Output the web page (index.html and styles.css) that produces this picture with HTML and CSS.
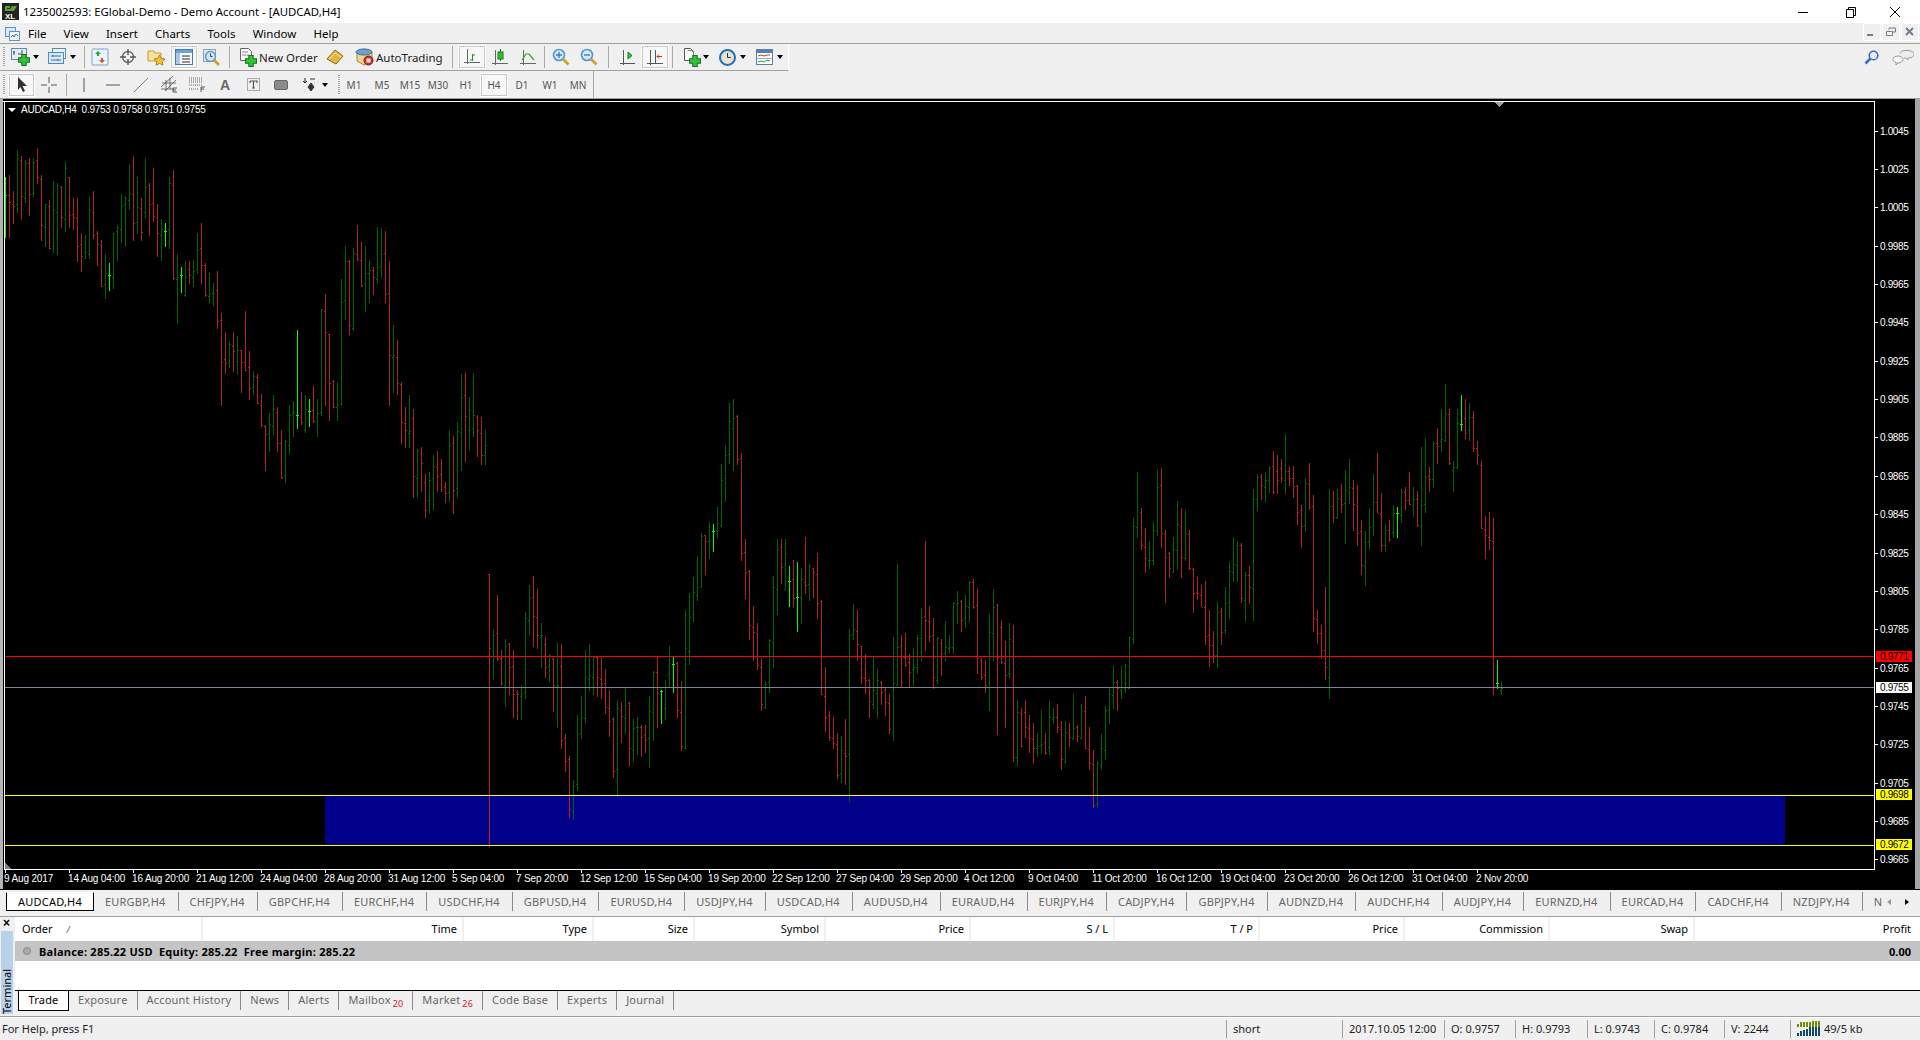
FILE: index.html
```html
<!DOCTYPE html>
<html lang="en">
<head>
    <meta charset="UTF-8">
    <title>1235002593: EGlobal-Demo - Demo Account - [AUDCAD,H4]</title>
    <link rel="stylesheet" href="styles.css">
</head>
<body>
    <svg class="defs" width="0" height="0">
        <symbol id="plus" viewBox="0 0 11 11"><path d="M3.5.5h4v3h3v4h-3v3h-4v-3h-3v-4h3z" fill="#35c435" stroke="#14752a"/></symbol>
        <symbol id="lens" viewBox="0 0 18 18"><circle cx="7" cy="7" r="5.5" fill="#d5e8fa" stroke="#4f93d8" stroke-width="1.6"/><path d="M11 11l5.5 5.5" stroke="#c9a227" stroke-width="2.6"/></symbol>
    </svg>

    <div class="titlebar">
        <svg class="logo" width="17" height="17" viewBox="0 0 17 17"><rect width="17" height="17" fill="#222"/><path d="M3 8V3h5v2H5v1h3l2-3h5l-3 5H8z" fill="#5da032"/><text x="3" y="16" class="logo-text">XL</text></svg>
        <span class="title-text">1235002593: EGlobal-Demo - Demo Account - [AUDCAD,H4]</span>
        <div class="window-btns">
            <svg width="46" height="20" viewBox="0 0 46 20"><path d="M18 10.5h10" stroke="#000"/></svg>
            <svg width="46" height="20" viewBox="0 0 46 20"><path d="M20.5 7.5h7v8h-7zM22.500 7V5.500h7v8H28" fill="none" stroke="#000"/></svg>
            <svg width="46" height="20" viewBox="0 0 46 20"><path d="M18 5l10 10M28 5L18 15" stroke="#000"/></svg>
        </div>
    </div>

    <div class="menubar">
        <svg class="menu-icon" width="16" height="15" viewBox="0 0 16 15"><rect x="1.500" y="1.500" width="10" height="9" fill="#dbe9f8" stroke="#5a93d0"/><rect x="5.500" y="5.500" width="10" height="9" fill="#f3f8fe" stroke="#5a93d0"/><path d="M7 11l2-2 1 2 2-3 2 2" fill="none" stroke="#2f6fb5"/></svg>
        <span class="menu-item">File</span>
        <span class="menu-item">View</span>
        <span class="menu-item">Insert</span>
        <span class="menu-item">Charts</span>
        <span class="menu-item">Tools</span>
        <span class="menu-item">Window</span>
        <span class="menu-item">Help</span>
        <div class="mdi-btns">
            <div class="mdi-btn"><svg width="12" height="12" viewBox="0 0 12 12"><path d="M1 9h6" stroke="#6f7f8f" stroke-width="2"/></svg></div>
            <div class="mdi-btn"><svg width="12" height="12" viewBox="0 0 12 12"><path d="M1.500 5.500h6v4h-6zM4 3.500V2h6.500v4H8" fill="none" stroke="#6f7f8f"/></svg></div>
            <div class="mdi-btn"><svg width="12" height="12" viewBox="0 0 12 12"><path d="M2 2l7 7M9 2L2 9" stroke="#6f7f8f" stroke-width="2"/></svg></div>
        </div>
    </div>

    <div class="toolbar-row">
        <div class="toolbar toolbar-main">
            <div class="grip"></div>
            <div class="btn drop drop-new">
                <svg width="20" height="20" viewBox="0 0 20 20"><rect x=".5" y="1.500" width="15" height="11" fill="#e6f0fb" stroke="#4f8ac9"/><path d="M3 4v4M2 5h2M7 7h5M11 3v3" stroke="#444"/><use href="#plus" x="7" y="7" width="12" height="12"/></svg>
                <i class="caret"></i>
            </div>
            <div class="btn drop drop-profile">
                <svg width="20" height="20" viewBox="0 0 20 20"><rect x="4.500" y="1.500" width="13" height="10" fill="#eef4fc" stroke="#4f8ac9"/><rect x=".5" y="5.500" width="15" height="11" fill="#dbe9f8" stroke="#4f8ac9"/><path d="M3 9h10M3 13h10M5 8v2M10 12v2" stroke="#3c72ad"/></svg>
                <i class="caret"></i>
            </div>
            <div class="sep w3"></div>
            <div class="btn">
                <svg width="18" height="18" viewBox="0 0 18 18"><rect x="1" y="1" width="16" height="16" rx="1" fill="#edf4fc" stroke="#74a3d6"/><path d="M7 3l3 3H8v2H6V6H4z" fill="#2aa52a"/><path d="M11 15l-3-3h2v-2h2v2h2z" fill="#d6502a"/></svg>
            </div>
            <div class="btn">
                <svg width="18" height="18" viewBox="0 0 18 18"><circle cx="9" cy="9" r="5.500" fill="none" stroke="#666" stroke-width="1.400"/><path d="M9 1v6M9 11v6M1 9h6M11 9h6" stroke="#555" stroke-width="1.400"/></svg>
            </div>
            <div class="btn">
                <svg width="19" height="19" viewBox="0 0 19 19"><path d="M1 3h6l1 2h6v8H1z" fill="#f7e39b" stroke="#c09a3b"/><path d="M12.500 7l1.700 3.400 3.800.5-2.700 2.600.6 3.700-3.400-1.800-3.400 1.800.6-3.700L7 10.900l3.800-.5z" fill="#f2c230" stroke="#a9822a"/></svg>
            </div>
            <div class="btn on">
                <svg width="18" height="16" viewBox="0 0 18 16"><rect x=".5" y=".5" width="17" height="15" fill="#fff" stroke="#3f79bf"/><rect x="1" y="1" width="16" height="3" fill="#6fa3dc"/><rect x="1" y="4" width="4" height="11" fill="#a9c8ea"/><path d="M7 7h8M7 10h8M7 13h8" stroke="#223"/></svg>
            </div>
            <div class="btn">
                <svg width="18" height="19" viewBox="0 0 18 19"><rect x=".5" y="1.500" width="12" height="12" fill="#e4e8ee" stroke="#8aa0b8"/><circle cx="7.500" cy="8.500" r="5" fill="#cfe4f8" stroke="#5f93c8" stroke-width="1.400"/><path d="M7.500 5.500v3h2" fill="none" stroke="#345"/><path d="M11 12l5 5" stroke="#c9a227" stroke-width="2.600"/></svg>
            </div>
            <div class="sep w7"></div>
            <div class="btn text-btn w88">
                <svg width="18" height="20" viewBox="0 0 18 20"><path d="M1.500 1.500h8l3 3v9h-11z" fill="#fff" stroke="#666"/><path d="M3 5h6M3 8h7" stroke="#888"/><use href="#plus" x="6" y="8" width="12" height="12"/></svg>
                <span>New Order</span>
            </div>
            <div class="btn">
                <svg width="18" height="16" viewBox="0 0 18 16"><path d="M1 10L9 1l8 6-7 8z" fill="#e5b63f" stroke="#8a6a1c"/><path d="M3 10l6-6 6 4" fill="none" stroke="#fbe9a8"/></svg>
            </div>
            <div class="btn text-btn w97">
                <svg width="19" height="18" viewBox="0 0 19 18"><path d="M2 4l7-3 8 3v9l-8 4-7-4z" fill="#ecd58c" stroke="#9a8a5a"/><ellipse cx="9" cy="4" rx="8" ry="3" fill="#6f9fd0" stroke="#3b6e9f"/><circle cx="13.500" cy="12.500" r="4.500" fill="#d62a1a" stroke="#8f1a10"/><rect x="11.500" y="10.500" width="4" height="4" fill="#fff"/></svg>
                <span>AutoTrading</span>
            </div>
            <div class="sep w12"></div>
            <div class="btn on">
                <svg width="16" height="17" viewBox="0 0 16 17"><path d="M3.500 0v15M0 13.500h16" stroke="#666"/><path d="M8.500 5v7M8.500 6H11M8.500 11H6" stroke="#1c9a1c"/></svg>
            </div>
            <div class="btn">
                <svg width="16" height="17" viewBox="0 0 16 17"><path d="M3.500 1v15M0 14.500h16" stroke="#666"/><path d="M8.500 0v12" stroke="#1c7a1c"/><rect x="6" y="3" width="5" height="7" fill="#2fc42f" stroke="#177a17"/></svg>
            </div>
            <div class="btn">
                <svg width="16" height="17" viewBox="0 0 16 17"><path d="M3.500 1v15M0 14.500h16" stroke="#666"/><path d="M2 11l4-6 3 0 5 6" fill="none" stroke="#3f9a3f" stroke-width="1.200"/></svg>
            </div>
            <div class="sep w5"></div>
            <div class="btn">
                <svg width="18" height="18" viewBox="0 0 18 18"><use href="#lens" width="18" height="18"/><path d="M4 7h6M7 4v6" stroke="#3c7fc4" stroke-width="1.400"/></svg>
            </div>
            <div class="btn">
                <svg width="18" height="18" viewBox="0 0 18 18"><use href="#lens" width="18" height="18"/><path d="M4 7h6" stroke="#3c7fc4" stroke-width="1.400"/></svg>
            </div>
            <div class="sep w10"></div>
            <div class="btn">
                <svg width="15" height="17" viewBox="0 0 15 17"><path d="M3.500 1v15M0 14.500h15" stroke="#555"/><path d="M8 3l4 3.500L8 10z" fill="#3fc43f" stroke="#177a17"/></svg>
            </div>
            <div class="btn on">
                <svg width="16" height="17" viewBox="0 0 16 17"><path d="M3.500 1v15M0 14.500h16" stroke="#555"/><path d="M8.500 1v13" stroke="#2a5f9f"/><path d="M15 7.500H10M12 5.500l-2 2 2 2" fill="none" stroke="#c9301c"/></svg>
            </div>
            <div class="sep w6"></div>
            <div class="btn drop drop-template">
                <svg width="18" height="20" viewBox="0 0 18 20"><path d="M1.500 1.500h6l3 3v9h-9z" fill="#fff" stroke="#555"/><path d="M4.500 3.500h4l2 2v7" fill="none" stroke="#888"/><use href="#plus" x="6" y="8" width="12" height="12"/></svg>
                <i class="caret"></i>
            </div>
            <div class="btn drop drop-clock">
                <svg width="17" height="17" viewBox="0 0 17 17"><circle cx="8.500" cy="8.500" r="7.500" fill="#e9e4d0" stroke="#1f6fbf" stroke-width="2"/><path d="M8.500 4v4.500H12" fill="none" stroke="#333"/></svg>
                <i class="caret"></i>
            </div>
            <div class="btn drop drop-indicator">
                <svg width="17" height="16" viewBox="0 0 17 16"><rect x=".5" y=".5" width="16" height="15" fill="#fff" stroke="#5a7fa8"/><rect x="1" y="1" width="15" height="3" fill="#4f81bd"/><path d="M1 9.500h15" stroke="#9ab"/><path d="M2 7l3-1 3 1 3-1 3 0" fill="none" stroke="#c0392b"/><path d="M2 13l3-1 3 1 3-2 3 1" fill="none" stroke="#2a9a3a"/></svg>
                <i class="caret"></i>
            </div>
        </div>
        <div class="toolbar-right">
            <svg width="15" height="15" viewBox="0 0 15 15"><circle cx="9.500" cy="5.500" r="4.300" fill="none" stroke="#2f6fd6" stroke-width="1.600"/><path d="M6.500 8.500L1.500 13.500" stroke="#2f6fd6" stroke-width="2.600"/></svg>
            <svg width="22" height="16" viewBox="0 0 22 16"><path d="M8 3.500a5 3 0 0 1 5-3h3a5 3 0 0 1 0 7.500v2l-2-2h-2" fill="#ececec" stroke="#999"/><ellipse cx="6" cy="9.500" rx="5" ry="3.500" fill="#fafafa" stroke="#999"/><path d="M4 13v2l2-2" fill="#fafafa" stroke="#999"/></svg>
        </div>
    </div>

    <div class="toolbar-row last">
        <div class="toolbar toolbar-draw">
            <div class="grip"></div>
            <div class="btn on draw-cursor">
                <svg width="12" height="15" viewBox="0 0 12 15"><path d="M2 0l9 9H6.500l2.500 5-2 1-2.500-5L2 13z" fill="#333"/></svg>
            </div>
            <div class="btn">
                <svg width="16" height="16" viewBox="0 0 16 16"><path d="M8 0v6M8 10v6M0 8h6M10 8h6" stroke="#555"/></svg>
            </div>
            <div class="sep w7"></div>
            <div class="btn"><svg width="2" height="14" viewBox="0 0 2 14"><path d="M1 0v14" stroke="#555"/></svg></div>
            <div class="btn draw-shift"><svg width="14" height="2" viewBox="0 0 14 2"><path d="M0 1h14" stroke="#555"/></svg></div>
            <div class="btn"><svg width="14" height="14" viewBox="0 0 14 14"><path d="M0 14L14 0" stroke="#777"/></svg></div>
            <div class="btn">
                <svg width="17" height="17" viewBox="0 0 17 17"><path d="M0 11L12 0M0 13h13M4 15L15 4M1 7h14M5 4v11M9 2v11" stroke="#555" fill="none" stroke-width=".8"/><path d="M12 12h4M12 14h3M12 16h4M12 12v4" stroke="#555"/></svg>
            </div>
            <div class="btn">
                <svg width="16" height="15" viewBox="0 0 16 15"><path d="M0 1h14M0 3h14M0 5h14M0 8h14M0 12h10" stroke="#666" stroke-dasharray="1 1"/><path d="M12 10h4M12 12h3M12 10v5" stroke="#555"/></svg>
            </div>
            <div class="btn draw-letter">A</div>
            <div class="btn">
                <svg width="13" height="13" viewBox="0 0 13 13"><rect x=".5" y=".5" width="12" height="12" fill="none" stroke="#666" stroke-dasharray="1 1"/><path d="M3 3h7v2M6.500 3v7M5 10h3M3 3v2" fill="none" stroke="#555" stroke-width="1.200"/></svg>
            </div>
            <div class="btn"><svg width="14" height="10" viewBox="0 0 14 10"><rect x=".5" y=".5" width="13" height="9" rx="1.500" fill="#8a8a8a" stroke="#666"/></svg></div>
            <div class="btn draw-arrows">
                <svg width="14" height="14" viewBox="0 0 14 14"><path d="M2 0v5M0 3l2 2 2-2" fill="none" stroke="#222"/><path d="M8 5l3 4-3 4-3-4zM7 1h5" fill="#333" stroke="#333"/></svg>
                <i class="caret"></i>
            </div>
            <div class="grip period-grip"></div>
            <div class="btn period">M1</div>
            <div class="btn period">M5</div>
            <div class="btn period">M15</div>
            <div class="btn period">M30</div>
            <div class="btn period">H1</div>
            <div class="btn period on">H4</div>
            <div class="btn period">D1</div>
            <div class="btn period">W1</div>
            <div class="btn period">MN</div>
        </div>
    </div>

    <div id="chart" class="chart">
        <div class="chart-legend"><i class="legend-arrow"></i>AUDCAD,H4&nbsp; 0.9753 0.9758 0.9751 0.9755</div>
    </div>

    <div class="doc-tabs">
        <span class="doc-tab active">AUDCAD,H4</span>
        <span class="doc-tab">EURGBP,H4</span>
        <span class="doc-tab">CHFJPY,H4</span>
        <span class="doc-tab">GBPCHF,H4</span>
        <span class="doc-tab">EURCHF,H4</span>
        <span class="doc-tab">USDCHF,H4</span>
        <span class="doc-tab">GBPUSD,H4</span>
        <span class="doc-tab">EURUSD,H4</span>
        <span class="doc-tab">USDJPY,H4</span>
        <span class="doc-tab">USDCAD,H4</span>
        <span class="doc-tab">AUDUSD,H4</span>
        <span class="doc-tab">EURAUD,H4</span>
        <span class="doc-tab">EURJPY,H4</span>
        <span class="doc-tab">CADJPY,H4</span>
        <span class="doc-tab">GBPJPY,H4</span>
        <span class="doc-tab">AUDNZD,H4</span>
        <span class="doc-tab">AUDCHF,H4</span>
        <span class="doc-tab">AUDJPY,H4</span>
        <span class="doc-tab">EURNZD,H4</span>
        <span class="doc-tab">EURCAD,H4</span>
        <span class="doc-tab">CADCHF,H4</span>
        <span class="doc-tab">NZDJPY,H4</span>
        <span class="doc-tab last">N</span>
        <div class="tab-arrows"><i class="arrow-left"></i><i class="arrow-right"></i></div>
    </div>

    <div class="terminal">
        <div class="terminal-side">
            <span class="terminal-close">×</span>
            <span class="terminal-caption">Terminal</span>
        </div>
        <div class="terminal-body">
            <div class="term-grid term-head">
                <span class="col-order">Order<em>/</em></span>
                <span>Time</span>
                <span>Type</span>
                <span>Size</span>
                <span>Symbol</span>
                <span>Price</span>
                <span>S / L</span>
                <span>T / P</span>
                <span>Price</span>
                <span>Commission</span>
                <span>Swap</span>
                <span>Profit</span>
            </div>
            <div class="balance-row">
                <i class="balance-dot"></i>
                <span class="balance-text">Balance: 285.22 USD&nbsp; Equity: 285.22&nbsp; Free margin: 285.22</span>
                <span class="balance-profit">0.00</span>
            </div>
            <div class="term-empty"></div>
            <div class="term-tabs">
                <span class="term-tab active">Trade</span>
                <span class="term-tab">Exposure</span>
                <span class="term-tab">Account History</span>
                <span class="term-tab">News</span>
                <span class="term-tab">Alerts</span>
                <span class="term-tab">Mailbox<sub>20</sub></span>
                <span class="term-tab">Market<sub>26</sub></span>
                <span class="term-tab">Code Base</span>
                <span class="term-tab">Experts</span>
                <span class="term-tab">Journal</span>
            </div>
        </div>
    </div>

    <div class="statusbar">
        <span class="cell cell-help">For Help, press F1</span>
        <span class="cell cell-short">short</span>
        <span class="cell cell-date">2017.10.05 12:00</span>
        <span class="cell cell-o">O: 0.9757</span>
        <span class="cell cell-h">H: 0.9793</span>
        <span class="cell cell-l">L: 0.9743</span>
        <span class="cell cell-c">C: 0.9784</span>
        <span class="cell cell-v">V: 2244</span>
        <span class="cell cell-net">
            <svg width="24" height="15" viewBox="0 0 24 15"><path d="M1 3v3M4 1v5M7 1v5M10 1v5M13 1v5M16 0v6M19 0v6M22 0v6" stroke="#6f8f00" stroke-width="2"/><path d="M1 12v3M4 10v5M7 9v6M10 8v7M13 6v9M16 6v9M19 6v9M22 6v9" stroke="#0f4a6a" stroke-width="2"/></svg>
            49/5 kb
        </span>
    </div>

    <script src="chart.js"></script>
</body>
</html>
```

FILE: styles.css
```css
* {
    box-sizing: border-box;
}
html, body {
    margin: 0;
    height: 1040px;
    overflow: hidden;
}
body {
    display: flex;
    flex-direction: column;
    background: #f0f0f0;
    color: #000;
    font-family: "Noto Sans", "Liberation Sans", sans-serif;
    font-size: 11px;
}
.defs {
    position: absolute;
}

/* title bar */
.titlebar {
    height: 23px;
    background: #fff;
    display: flex;
    align-items: center;
    flex: none;
}
.logo {
    margin: 0 4px 0 2px;
}
.logo-text {
    font: bold 8px "Liberation Sans", sans-serif;
    fill: #fff;
}
.title-text {
    font-size: 11.4px;
}
.window-btns {
    margin-left: auto;
    display: flex;
    margin-right: 2px;
}

/* menu */
.menubar {
    height: 21px;
    flex: none;
    display: flex;
    align-items: center;
    font-size: 11.5px;
    border-bottom: 1px solid #a0a0a0;
}
.menu-icon {
    margin-left: 4px;
    margin-right: -1px;
}
.menu-item {
    padding: 0 8.6px;
}
.menu-item:first-of-type {
    padding-left: 9px;
}
.mdi-btns {
    margin-left: auto;
    display: flex;
    gap: 1px;
    margin-right: 1px;
    align-self: flex-start;
}
.mdi-btn {
    width: 18px;
    height: 18px;
    border: 1px solid #fff;
    display: flex;
    align-items: center;
    justify-content: center;
}

/* toolbars */
.toolbar-row {
    height: 27px;
    flex: none;
    display: flex;
    align-items: center;
}
.toolbar-row.last {
    border-bottom: 1px solid #a0a0a0;
    height: 28px;
}
.toolbar {
    display: flex;
    align-items: center;
    height: 100%;
    padding-left: 3px;
}
.toolbar-main {
    width: 789px;
    border-bottom: 1px solid #a0a0a0;
    border-right: 1px solid #fff;
}
.toolbar-right {
    margin-left: auto;
    display: flex;
    align-items: center;
    gap: 13px;
    margin-right: 6px;
    padding-left: 60px;
}
.grip {
    width: 2px;
    height: 20px;
    margin-right: 3px;
    flex: none;
    background: repeating-linear-gradient(#a5a5a5 0 1px, transparent 1px 2px);
}
.btn {
    width: 28px;
    height: 24px;
    flex: none;
    display: flex;
    align-items: center;
    justify-content: center;
    gap: 5px;
}
.btn.on {
    background: #f8f8f8;
    outline: 1px solid #c8c8c8;
    outline-offset: -2px;
    border: 1px solid #fff;
}
.btn.text-btn {
    justify-content: flex-start;
    padding-left: 6px;
    font-size: 11.5px;
    color: #222;
    gap: 2px;
}
.btn.drop {
    justify-content: flex-start;
    gap: 2px;
}
.btn.drop-new { width: 38px; padding-left: 3px; }
.btn.drop-profile { width: 37px; padding-left: 2px; }
.btn.drop-template { width: 38px; padding-left: 8px; }
.btn.drop-clock { width: 36px; padding-left: 6px; gap: 4px; }
.btn.drop-indicator { width: 38px; padding-left: 7px; gap: 4px; }
.btn.w88 { width: 88px; }
.btn.w97 { width: 97px; }
.caret {
    width: 0;
    height: 0;
    border: 3px solid transparent;
    border-top: 4px solid #000;
    border-bottom: 0;
}
.sep {
    height: 22px;
    flex: none;
    background: linear-gradient(#a8a8a8, #a8a8a8) center / 1px 100% no-repeat;
}
.w3 { width: 3px; }
.w5 { width: 5px; }
.w6 { width: 6px; }
.w7 { width: 7px; }
.w10 { width: 10px; }
.w12 { width: 12px; }
.draw-letter {
    font: bold 14px "Liberation Sans", sans-serif;
    color: #666;
}
.draw-shift {
    margin-left: 1px;
}
.draw-arrows {
    width: 41px;
}
.draw-cursor {
    width: 27px;
}
.period-grip {
    margin-left: 2px;
    margin-right: 0;
}
.btn.period {
    color: #555;
    font-size: 10px;
}
.toolbar-draw {
    width: 594px;
    border-right: 1px solid #a8a8a8;
}

/* chart */
.chart {
    position: relative;
    height: 790px;
    flex: none;
    background: #000;
    border-left: 3px solid #b4b4b4;
    border-right: 5px solid #a5a5a5;
    overflow: hidden;
}
.chart svg {
    position: absolute;
    left: -3px;
    top: 0;
}
.chart-legend {
    position: absolute;
    left: 18px;
    top: 5px;
    z-index: 2;
    color: #fff;
    font: 10px "Liberation Sans", sans-serif;
    letter-spacing: -.25px;
    white-space: pre;
}
.legend-arrow {
    position: absolute;
    left: -13px;
    top: 4px;
    border: 4px solid transparent;
    border-top: 4px solid #fff;
    border-bottom: 0;
}
.axis-price, .axis-time, .price-tag {
    position: absolute;
    font: 10px/11px "Liberation Sans", sans-serif;
    letter-spacing: -.35px;
    color: #fff;
    white-space: nowrap;
}
.axis-time {
    letter-spacing: -.15px;
}
.price-tag {
    width: 36px;
    height: 11px;
    padding-left: 4px;
    color: #000;
}
.price-tag.red { background: #f00; }
.price-tag.white { background: #fff; }
.price-tag.yellow { background: #ff0; }

/* document tabs */
.doc-tabs {
    position: relative;
    height: 28px;
    flex: none;
    display: flex;
    padding: 3px 0 0 6px;
    overflow: hidden;
    border-bottom: 1px solid #a0a0a0;
    box-shadow: inset 0 1px 0 #000;
}
.doc-tab {
    height: 19px;
    line-height: 19px;
    color: #666;
    padding: 0 12px 0 11px;
    position: relative;
    white-space: nowrap;
    letter-spacing: .2px;
    border-right: 1px solid #8a8a8a;
}
.doc-tab.active {
    width: 88px;
    padding: 0;
    text-align: center;
    background: #fff;
    color: #000;
    border: 1px solid #000;
    border-top-color: #fff;
    line-height: 17px;
}
.doc-tab.last {
    border: 0;
}
.tab-arrows {
    position: absolute;
    right: 0;
    top: 3px;
    width: 36px;
    height: 19px;
    background: #f0f0f0;
    display: flex;
    align-items: center;
    gap: 14px;
    padding-left: 3px;
}
.arrow-left {
    border: 3px solid transparent;
    border-right: 4px solid #999;
    border-left: 0;
}
.arrow-right {
    border: 3px solid transparent;
    border-left: 4px solid #000;
    border-right: 0;
}

/* terminal */
.terminal {
    flex: 1;
    display: flex;
    min-height: 0;
}
.terminal-side {
    width: 15px;
    flex: none;
    display: flex;
    flex-direction: column;
    align-items: flex-start;
}
.terminal-close {
    width: 13px;
    text-align: center;
    font: bold 12px/13px "Liberation Sans", sans-serif;
    height: 13px;
}
.terminal-caption {
    margin-top: auto;
    margin-left: 1px;
    margin-bottom: 2px;
    width: 12px;
    height: 83px;
    background: #b9d1ea;
    writing-mode: vertical-rl;
    transform: rotate(180deg);
    line-height: 12px;
    padding-top: 0;
}
.terminal-body {
    flex: 1;
    display: flex;
    flex-direction: column;
    background: #fff;
    min-width: 0;
}
.term-grid {
    display: grid;
    grid-template-columns: 188px 261px 130px 101px 131px 145px 144px 145px 145px 145px 145px 1fr;
    height: 24px;
    line-height: 23px;
}
.term-head span {
    text-align: right;
    padding-right: 5px;
    border-right: 2px solid #f0f0f0;
}
.term-head span:last-child {
    border: 0;
    padding-right: 9px;
}
.term-head .col-order {
    text-align: left;
    padding-left: 7px;
}
.col-order em {
    margin-left: 14px;
    font-size: 9px;
    color: #555;
}
.balance-row {
    height: 20px;
    background: #c4c4c4;
    display: flex;
    align-items: center;
    font-weight: bold;
    padding: 0 9px 0 8px;
}
.balance-dot {
    width: 8px;
    height: 8px;
    border-radius: 50%;
    background: #aaa;
    border: 1px solid #888;
    margin-right: 8px;
}
.balance-text {
    letter-spacing: .25px;
}
.balance-profit {
    margin-left: auto;
}
.term-empty {
    height: 30px;
    border-bottom: 1px solid #000;
}
.term-tabs {
    flex: 1;
    display: flex;
    background: #f0f0f0;
    padding-left: 3px;
    border-bottom: 3px solid #f0f0f0;
}
.term-tab {
    height: 19px;
    line-height: 17px;
    padding: 0 9px;
    letter-spacing: .2px;
    color: #666;
    border-right: 1px solid #8a8a8a;
    white-space: nowrap;
}
.term-tab.active {
    width: 51px;
    padding: 0;
    text-align: center;
    background: #fff;
    color: #000;
    border: 1px solid #000;
    border-top: 0;
    height: 20px;
}
.term-tab sub {
    color: #e81123;
    font-size: 9px;
    line-height: 0;
    margin-left: 2px;
}

/* status bar */
.statusbar {
    height: 24px;
    flex: none;
    display: flex;
    align-items: center;
    border-top: 1px solid #a0a0a0;
    box-shadow: inset 0 1px 0 #fff;
    color: #222;
}
.cell {
    height: 18px;
    line-height: 18px;
    padding-left: 6px;
    border-left: 1px solid #a0a0a0;
    white-space: nowrap;
    display: flex;
    align-items: center;
    gap: 3px;
}
.cell-help { width: 1226px; border: 0; padding-left: 2px; }
.cell-short { width: 116px; }
.cell-date { width: 102px; }
.cell-o { width: 71px; }
.cell-h { width: 72px; }
.cell-l { width: 67px; }
.cell-c { width: 70px; }
.cell-v { width: 66px; }
.cell-net { flex: 1; }
```

FILE: chart.js
```js
// OHLC bars, one every 4px starting at x = 5
// each entry: [high, low, open, close], y values are in thirds of a pixel from base
const SEGMENTS = [
    { base: 110, bars: [
        [200,384,255,255],[195,384,255,277],[243,342,283,289],[120,308,283,145],[138,330,150,258],[150,278,265,158],
        [144,318,160,253],[144,260,250,157],[114,222,150,202],[195,392,208,346],[282,410,352,283],[270,416,288,414],
        [213,428,408,300],[219,434,307,225],[228,354,232,322],[156,366,327,175],[201,354,202,316],[264,360,312,322],
        [264,456,325,408],[370,486,402,438],[376,446,445,427],[258,446,432,300],[243,388,306,376],[364,468,370,403],
        [390,530,406,529],[432,566,522,490],[459,543,496,496],[370,536,502,370],[346,452,362,350],[252,400,356,288],
        [258,410,282,265],[162,300,270,250],[138,392,252,340],[201,372,336,290],[264,392,294,366],[144,324,305,232],
        [219,378,225,283],[174,336,278,318],[282,440,322,370],[327,452,375,358],[340,410,364,364],[201,416,358,218],
        [180,510,226,504],[432,641,508,502],[471,549,496,496],[453,560,555,500],[453,522,477,496],[450,530,500,482],
        [370,492,478,420],[339,522,415,465],[459,561,465,555],[489,579,558,552],[519,588,550,548],[484,657,540,634],
        [609,888,630,755],[666,792,748,760],[696,774,755,702],[666,786,708,722],[678,796,754,720],[720,849,720,755],
        [603,784,755,780],[723,870,772,835],[784,856,830,798],[792,882,800,880],[852,950,885,945],[945,1082,948,972],
        [909,1026,968,942],[855,975,948,898],[891,1026,905,1000],[960,1106,998,1100],[990,1118,1094,992],[885,1032,1005,915],
        [873,980,912,906],[660,957,916,916],[846,945,922,937],[855,968,960,898],[867,951,904,904],[828,939,900,932],
        [867,980,920,908],[597,918,905,598],[552,888,603,667],[672,933,672,818],[810,894,812,890],[816,933,892,885],
        [507,888,882,576],[408,630,570,453],[450,675,452,645],[414,663,655,428],[345,453,432,447],[396,530,450,525],
        [408,606,520,490],[450,578,488,480],[470,555,480,500],[351,522,508,472],[354,504,468,432],[363,579,428,552],
        [453,888,548,736],[645,850,740,736],[690,855,740,820],[816,1002,822,936],[891,1014,940,960],[855,1014,968,962],
        [897,1164,924,1098],[1017,1164,1104,1022],[1011,1146,1028,1060],[1092,1225,1116,1200],[1086,1212,1170,1110],[1035,1200,1104,1068],
        [1023,1146,1072,1098],[1047,1146,1092,1137],[1116,1180,1130,1150],[960,1176,1146,1005],[978,1212,1000,1140],[936,1164,1134,962],
        [792,1082,966,862],[789,1056,855,918],[861,1020,960,900],[789,980,955,915],[915,1040,920,960],[921,1065,968,1035],
        [960,1065,1035,1005]
    ] },
    { base: 380, bars: [
        [582,1400,583,805],[747,900,810,765],[645,842,760,838],[810,918,835,910],[777,980,915,798],[789,945,792,862],
        [810,1014,858,942],[930,1020,936,942],[915,1020,948,942],[696,957,936,715],[615,768,720,655],[588,800,652,708],
        [627,806,712,766],[729,864,772,765],[771,894,792,860],[822,906,858,826],[834,996,838,915],[789,1044,918,915],
        [792,1106,858,1080],[1062,1176,1075,1143],[1128,1314,1138,1288],[1200,1320,1293,1218],[1005,1233,1212,1062],[948,1077,1060,1012],
        [810,1032,1015,892],[792,932,898,885],[828,946,892,830],[830,951,832,892],[834,957,896,912],[867,1002,910,980],
        [930,1071,985,1024],[1010,1194,1018,1174],[960,1250,1168,984],[966,1089,990,1008],[921,1062,1014,975],[966,1158,968,1105],
        [1017,1146,1110,1045],[1011,1125,1042,1040],[1035,1131,1040,1070],[1035,1119,1065,1080],[948,1164,1075,992],[873,1083,995,875],
        [830,1044,875,938],[930,1032,932,932],[900,1020,985,885],[798,925,880,850],[828,939,853,853],[846,1014,850,990],
        [903,1113,995,1098],[690,1107,1105,805],[640,856,812,710],[591,726,702,635],[528,662,645,622],[459,624,618,468],
        [465,585,466,483],[426,537,484,480],[432,516,454,454],[381,474,450,428],[252,441,436,300],[195,366,295,225],
        [69,252,222,122],[57,273,145,115],[105,255,108,237],[219,543,234,520],[477,657,516,575],[570,780,572,735],
        [678,843,740,755],[729,870,760,855],[834,993,860,972],[903,987,982,912],[777,939,905,780],[588,864,785,622],
        [477,705,628,508],[477,612,502,560],[477,630,628,520],[558,681,604,604],[540,681,598,655],[546,756,652,652],
        [564,732,652,598],[471,642,605,615],[552,663,612,558],[564,654,565,575],[519,717,582,668],[660,945,662,942],
        [861,1056,948,1012],[993,1082,1005,1070],[1011,1107,1075,1090],[1059,1197,1092,1185],[1068,1209,1180,1110],[1017,1215,1118,1128],
        [747,1266,1123,765],[672,780,762,748],[690,843,752,792],[798,912,798,892],[822,942,895,900],[897,1014,900,962],
        [828,987,972,930],[867,1014,938,900],[903,975,905,935],[924,1008,930,965],[942,1062,968,1048],[771,1083,1055,910],
        [552,918,915,800],[765,924,798,905],[759,861,832,855],[822,924,845,875],[804,918,868,862],[765,882,860,775],
        [684,843,775,712],[483,813,708,720],[678,786,722,768],[714,927,765,892],[771,912,900,775],[777,888,788,818],
        [723,843,820,800],[765,820,805,800],[666,822,800,668],[633,733,672,668],
        [660,755,662,720],[645,744,715,678],[603,726,680,605],[597,686,605,680],[627,882,675,835],[834,900,840,890],
        [840,939,885,915],[702,993,910,755],[627,843,760,680],[672,1065,675,830],[720,852,742,845],[783,1044,848,885],
        [729,894,880,778],[735,1146,782,1130],[960,1158,1132,995],[984,1100,998,1098],[960,1074,995,1040],[1005,1120,1045,1075],
        [1030,1152,1078,1105],[1060,1130,1105,1098],[990,1122,1095,1092],[1058,1125,1087,1120],[960,1125,1100,1010],[984,1032,1018,1012],
        [972,1060,1012,1040],[1023,1170,1048,1138],[1023,1152,1143,1055],[1030,1100,1060,1070],[942,1080,1075,1045],[1035,1086,1040,1068],
        [972,1078,1075,990],[948,1106,992,1104],[1041,1170,1108,1150],[1110,1284,1152,1275],[1143,1284,1270,1150],[1062,1170,1155,1105],
        [978,1140,1110,990],[921,1032,990,942],[858,987,945,905],[900,992,905,925],[858,957,930,920],[852,939,925,908],
        [771,927,925,772],[414,792,778,438],[276,474,440,390],[384,510,396,496],[444,579,500,535],[483,567,541,540],
        [426,555,540,450],[270,468,452,322],[264,504,316,460],[450,669,462,530],[516,594,520,565],[471,579,575,508],
        [363,570,510,432],[384,594,438,530],[390,543,535,460],[450,570,462,565],[564,699,568,640],[590,660,635,640],
        [615,681,645,680],[603,795,680,768],[690,861,765,795],[753,850,795,825],[666,864,825,695],[684,795,692,755],
        [621,762,750,668],[546,717,665,572],[471,606,575,552],[483,606,555,495],[489,669,495,655],[576,726,660,585],
        [558,672,585,620],[327,723,625,358],[282,393,358,290],[282,360,288,315],[276,366,322,300],[258,340,300,265],
        [213,342,258,335],[225,342,272,300],[237,310,265,295],[162,342,300,272],[262,318,272,295],[258,354,295,318],
        [315,435,318,395],[375,504,390,438],[294,456,435,310],[249,390,312,380],[345,756,378,715],[690,792,718,758],
        [735,837,760,810],[621,900,810,862],[327,957,892,378],[333,429,378,410],[327,417,412,355],[312,400,357,372],
        [270,492,370,330],[237,372,335,322],[300,453,325,372],[315,498,375,460],[420,585,452,555],[453,618,558,485],
        [384,510,484,440],[282,468,438,365],[220,400,365,398],[339,516,402,495],[432,516,495,450],[420,486,450,478],
        [375,474,455,400],[381,474,398,398],[327,430,405,335],[321,390,335,360],[276,375,360,372],[321,411,375,358],
        [333,441,358,435],[201,498,438,375],[174,399,372,290],[260,336,288,296],[183,324,298,190],[144,252,188,198],
        [87,216,182,178],[12,186,180,100],[87,255,102,250],[243,336,270,260],[87,267,262,128],[45,153,133,133],
        [57,177,115,160],[69,183,150,110],[93,216,112,205],[183,255,205,225],[243,447,254,445],[408,537,448,465],
        [396,510,470,480],[414,945,484,918],[840,927,910,910],[903,945,930,925]
    ] }
];

const TIME_LABELS = ['9 Aug 2017', '14 Aug 04:00', '16 Aug 20:00', '21 Aug 12:00', '24 Aug 04:00', '28 Aug 20:00',
    '31 Aug 12:00', '5 Sep 04:00', '7 Sep 20:00', '12 Sep 12:00', '15 Sep 04:00', '19 Sep 20:00', '22 Sep 12:00',
    '27 Sep 04:00', '29 Sep 20:00', '4 Oct 12:00', '9 Oct 04:00', '11 Oct 20:00', '16 Oct 12:00', '19 Oct 04:00',
    '23 Oct 20:00', '26 Oct 12:00', '31 Oct 04:00', '2 Nov 20:00'];

const TAGS = [
    { price: '0.9771', top: 651, cls: 'red' },
    { price: '0.9755', top: 682, cls: 'white' },
    { price: '0.9698', top: 789, cls: 'yellow' },
    { price: '0.9672', top: 839, cls: 'yellow' }
];

const CHART_TOP = 99;
const AXIS_X = 1874;
const BOTTOM = 869;

function barPaths() {
    const paths = { up: '', down: '', doji: '' };
    let index = 0;
    SEGMENTS.forEach(seg => {
        const y = v => Math.round(seg.base + v / 3);
        seg.bars.forEach(([high, low, open, close]) => {
            const x = 5 + 4 * index++;
            const kind = open === close ? 'doji' : close < open ? 'up' : 'down';
            paths[kind] += `M${x + 0.5} ${y(high)}V${y(low)}`
                + `M${x} ${y(open) + 0.5}h-1M${x + 1} ${y(close) + 0.5}h1`;
        });
    });
    return paths;
}

function addLabel(chart, cls, text, left, top) {
    const el = document.createElement('span');
    el.className = cls;
    el.textContent = text;
    el.style.left = left - 3 + 'px';
    el.style.top = top - CHART_TOP + 'px';
    chart.appendChild(el);
}

function drawChart() {
    const chart = document.getElementById('chart');
    const paths = barPaths();
    let ticks = '';

    for (let k = 0; k < 20; k++) {
        const y = Math.round(859.3 - 38.35 * k);
        ticks += `M${AXIS_X} ${y + 0.5}h4`;
        addLabel(chart, 'axis-price', (0.9665 + k * 0.002).toFixed(4), 1880, y - 5);
    }
    TIME_LABELS.forEach((label, k) => {
        const x = 5 + 64 * k;
        ticks += `M${x + 0.5} ${BOTTOM}v4`;
        addLabel(chart, 'axis-time', label, x - 1, 873);
    });
    TAGS.forEach(tag => addLabel(chart, 'price-tag ' + tag.cls, tag.price, 1876, tag.top));

    const svg = `<svg width="1920" height="790" viewBox="0 ${CHART_TOP} 1920 790" shape-rendering="crispEdges" fill="none">
        <rect x="325" y="795" width="1460" height="50" fill="#00008b"/>
        <path d="${paths.up}" stroke="#006400"/>
        <path d="${paths.down}" stroke="#b22222"/>
        <path d="${paths.doji}" stroke="#00ff00"/>
        <path d="M5 656.5H${AXIS_X}" stroke="#ff0000"/>
        <path d="M5 687.5H${AXIS_X}" stroke="#778899"/>
        <path d="M5 795.5H${AXIS_X}M5 845.5H${AXIS_X}" stroke="#ffff00"/>
        <path d="M4.5 101V${BOTTOM + 0.5}H${AXIS_X + 0.5}V101" stroke="#fff"/>
        <path d="M3 101.500H${AXIS_X}" stroke="#fff"/>
        <path d="${ticks}" stroke="#fff"/>
        <path d="M1495 102h9l-4.500 5z" fill="#a0a0a0"/>
        <path d="M5 863l6 6H5z" fill="#808080"/>
    </svg>`;
    chart.insertAdjacentHTML('afterbegin', svg);
}

drawChart();
```
